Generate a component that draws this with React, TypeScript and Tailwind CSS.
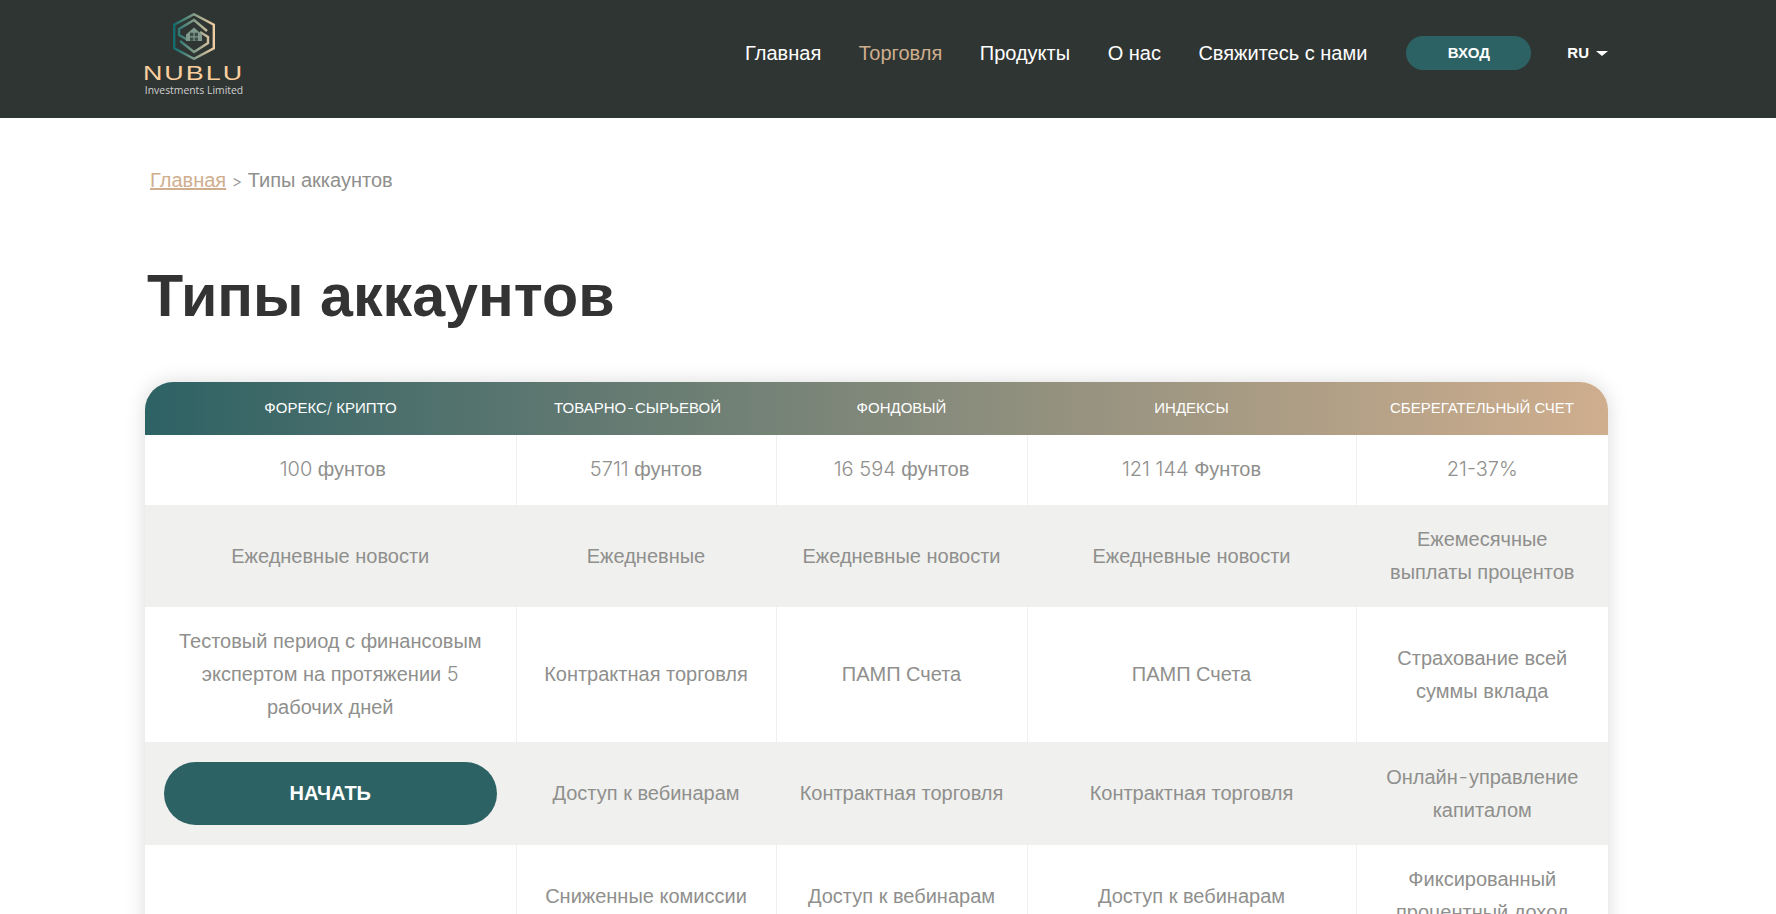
const Num = ({ children }: { children: string }) => (
  <span className="font-['Inter',sans-serif] font-light">{children}</span>
)

function Logo() {
  return (
    <div className="flex w-[98px] flex-col items-center pt-[13px]">
      <svg width="42" height="47" viewBox="0 0 42 47" fill="none">
        <defs>
          <linearGradient id="logoGrad" gradientUnits="userSpaceOnUse" x1="0" y1="0" x2="42" y2="0">
            <stop offset="0" stopColor="#0d6a6c" />
            <stop offset="1" stopColor="#f5cfa5" />
          </linearGradient>
        </defs>
        <g stroke="url(#logoGrad)" strokeWidth="2.4">
          <path d="M21 1.2 40.8 11.7V35.3L21 45.8 1.2 35.3V11.7Z" />
          <path d="M34 18 21 7 6 16V22L15 27" />
          <path d="M7 28 21 39 35 30V24L27 19" />
        </g>
        <path d="M21 14.5 29 21.5V28H13V21.5Z" fill="#7f9a8d" />
        <path d="M17 19.8H20.4V23.2H17ZM21.6 19.8H25V23.2H21.6ZM17 24.4H20.4V27.8H17ZM21.6 24.4H25V27.8H21.6Z" fill="#3d4d48" />
      </svg>
      <div className="mt-[3px] scale-x-[1.28] font-['Liberation_Sans',sans-serif] text-[21px] leading-[20px] tracking-[1.6px] text-[#fbcf9f]">NUBLU</div>
      <div className="font-['Open_Sans',sans-serif] text-[10.4px] leading-[14px] whitespace-nowrap text-[#d0d0d0]">Investments Limited</div>
    </div>
  )
}

const navItems = ['Главная', 'Торговля', 'Продукты', 'О нас', 'Свяжитесь с нами']

const hyphen = <span className="px-[1px] font-['Inter',sans-serif] font-light">-</span>

const rows: { bg: string; h: string; pad?: string; cells: React.ReactNode[] }[] = [
  {
    bg: 'bg-white',
    h: 'h-[70px]',
    pad: 'pb-[2px]',
    cells: [
      <span className="pl-[5px]"><Num>100</Num> фунтов</span>,
      <><Num>5711</Num> фунтов</>,
      <><Num>16 594</Num> фунтов</>,
      <><Num>121 144</Num> Фунтов</>,
      <Num>21-37%</Num>,
    ],
  },
  {
    bg: 'bg-[#f0f0ee]',
    h: 'h-[102px]',
    cells: ['Ежедневные новости', 'Ежедневные', 'Ежедневные новости', 'Ежедневные новости', <>Ежемесячные<br />выплаты процентов</>],
  },
  {
    bg: 'bg-white',
    h: 'h-[135px]',
    cells: [
      <>Тестовый период с финансовым<br />экспертом на протяжении <Num>5</Num><br />рабочих дней</>,
      'Контрактная торговля',
      'ПАМП Счета',
      'ПАМП Счета',
      <>Страхование всей<br />суммы вклада</>,
    ],
  },
  {
    bg: 'bg-[#f0f0ee]',
    h: 'h-[103px]',
    cells: [
      <button className="h-[63px] w-[333px] rounded-[32px] bg-[#2d6264] text-[20px] font-bold text-white">НАЧАТЬ</button>,
      'Доступ к вебинарам',
      'Контрактная торговля',
      'Контрактная торговля',
      <>Онлайн{hyphen}управление<br />капиталом</>,
    ],
  },
  {
    bg: 'bg-white',
    h: 'h-[102px]',
    cells: ['', 'Сниженные комиссии', 'Доступ к вебинарам', 'Доступ к вебинарам', <>Фиксированный<br />процентный доход</>],
  },
]

const heads: { label: React.ReactNode; cls?: string }[] = [
  { label: <>ФОРЕКС<span className="font-['Inter',sans-serif] font-light">/</span> КРИПТО</> },
  { label: <>ТОВАРНО{hyphen}СЫРЬЕВОЙ</>, cls: 'pr-[17px]' },
  { label: 'ФОНДОВЫЙ' },
  { label: 'ИНДЕКСЫ' },
  { label: 'СБЕРЕГАТЕЛЬНЫЙ СЧЕТ' },
]

export default function App() {
  return (
    <div className="h-screen overflow-hidden bg-white font-['Liberation_Sans',sans-serif]">
      <header className="h-[118px] bg-[#2f3533]">
        <div className="ml-[145px] flex h-full w-[1463px] items-start justify-between">
          <Logo />
          <nav className="flex h-[106px] items-center">
            <ul className="flex items-center gap-[37.5px] text-[20px] text-white">
              {navItems.map((item) => (
                <li key={item} className={item === 'Торговля' ? 'text-[#cfae8e]' : ''}>{item}</li>
              ))}
            </ul>
            <button className="ml-[39px] h-[34px] w-[125px] rounded-[17px] bg-[#2d6264] text-[15px] font-bold text-white">ВХОД</button>
            <div className="ml-[36px] flex items-center gap-[7px] text-[15px] font-bold text-white">
              RU
              <span className="h-0 w-0 border-x-[6px] border-t-[5px] border-x-transparent border-t-white" />
            </div>
          </nav>
        </div>
      </header>

      <main className="ml-[145px] w-[1463px]">
        <div className="pt-[50px] pl-[5px] text-[20px] leading-[24px] text-[#8f8f8d]">
          <a className="text-[#cfae8e] underline">Главная</a> <span className="font-['Inter',sans-serif] text-[16px] font-light">&gt;</span> Типы аккаунтов
        </div>
        <h1 className="mt-[67px] pl-[2px] text-[59.2px] leading-[72px] font-bold text-[#333]">Типы аккаунтов</h1>

        <div className="mt-[50px] overflow-hidden rounded-t-[28px] shadow-[0_0_20px_rgba(0,0,0,0.15)]">
          <table className="w-full table-fixed border-collapse text-center text-[20px] leading-[33px] text-[#8f8f8d]">
            <colgroup>
              <col className="w-[371px]" />
              <col className="w-[260px]" />
              <col className="w-[251px]" />
              <col className="w-[329px]" />
              <col className="w-[252px]" />
            </colgroup>
            <thead>
              <tr className="h-[53px] bg-gradient-to-r from-[#2d6264] to-[#cfae8e] text-[15px] leading-[20px] text-white">
                {heads.map((h, i) => (
                  <th key={i} className={`pb-[2px] font-normal ${h.cls ?? ''}`}>{h.label}</th>
                ))}
              </tr>
            </thead>
            <tbody>
              {rows.map((row, i) => (
                <tr key={i} className={`${row.bg} ${row.h}`}>
                  {row.cells.map((cell, j) => (
                    <td key={j} className={`border-l border-[#f0f0ee] first:border-l-0 ${row.pad ?? ''}`}>
                      {cell}
                    </td>
                  ))}
                </tr>
              ))}
            </tbody>
          </table>
        </div>
      </main>
    </div>
  )
}
